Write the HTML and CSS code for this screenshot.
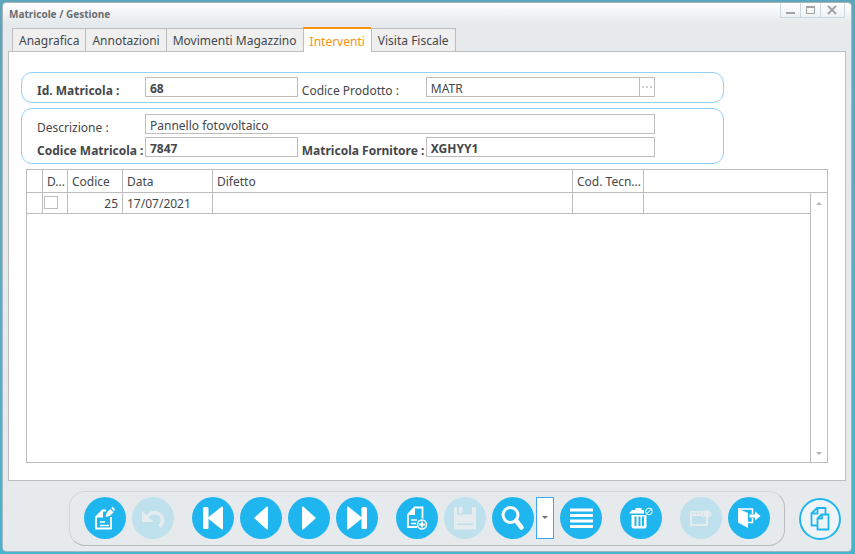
FILE: index.html
```html
<!DOCTYPE html>
<html lang="it">
<head>
    <meta charset="UTF-8">
    <meta name="viewport" content="width=device-width, initial-scale=1.0">
    <title>Matricole / Gestione</title>
    <link rel="stylesheet" href="styles.css">
</head>
<body>
    <main class="window">
        <header class="title-bar">
            <h1>Matricole / Gestione</h1>
            <div class="window-buttons">
                <button type="button" aria-label="Riduci">
                    <svg width="20" height="14" viewBox="0 0 20 14"><path d="M5 10h9" stroke="#a3a3a3" stroke-width="2"/></svg>
                </button>
                <button type="button" aria-label="Ingrandisci">
                    <svg width="20" height="14" viewBox="0 0 20 14"><path d="M5.500 4v6.500h8V4" fill="none" stroke="#a3a3a3"/><path d="M5 4h9" stroke="#a3a3a3" stroke-width="2"/></svg>
                </button>
                <button type="button" class="close" aria-label="Chiudi">
                    <svg width="22" height="14" viewBox="0 0 22 14"><path d="M7 3l8 8M15 3l-8 8" stroke="#a3a3a3" stroke-width="2"/></svg>
                </button>
            </div>
        </header>

        <nav class="tabs">
            <button type="button">Anagrafica</button>
            <button type="button">Annotazioni</button>
            <button type="button">Movimenti Magazzino</button>
            <button type="button" class="active">Interventi</button>
            <button type="button">Visita Fiscale</button>
        </nav>

        <section class="panel">
            <form class="fields">
                <div class="group">
                    <label class="strong" for="id_matricola">Id. Matricola :</label>
                    <input class="strong" type="text" id="id_matricola" value="68">
                    <label class="second" for="codice_prodotto">Codice Prodotto :</label>
                    <div class="lookup">
                        <input type="text" id="codice_prodotto" value="MATR">
                        <button type="button" aria-label="Cerca prodotto">
                            <svg width="14" height="18" viewBox="0 0 14 18"><path d="M2 9h10" stroke="#d0d0d0" stroke-width="2" stroke-dasharray="2 2"/></svg>
                        </button>
                    </div>
                </div>
                <div class="group tall">
                    <label for="descrizione">Descrizione :</label>
                    <input class="wide" type="text" id="descrizione" value="Pannello fotovoltaico">
                    <label class="strong" for="codice_matricola">Codice Matricola :</label>
                    <input class="strong" type="text" id="codice_matricola" value="7847">
                    <label class="strong second" for="matricola_fornitore">Matricola Fornitore :</label>
                    <input class="strong" type="text" id="matricola_fornitore" value="XGHYY1">
                </div>
            </form>

            <table class="grid">
                <colgroup>
                    <col class="col-mark"><col class="col-check"><col class="col-code"><col class="col-date">
                    <col><col class="col-tech"><col class="col-rest"><col class="col-scroll">
                </colgroup>
                <thead>
                    <tr>
                        <th></th>
                        <th>D...</th>
                        <th>Codice</th>
                        <th>Data</th>
                        <th>Difetto</th>
                        <th>Cod. Tecn...</th>
                        <th colspan="2"></th>
                    </tr>
                </thead>
                <tbody>
                    <tr class="record">
                        <td></td>
                        <td class="check"><input type="checkbox" aria-label="D"></td>
                        <td class="number">25</td>
                        <td>17/07/2021</td>
                        <td></td>
                        <td></td>
                        <td></td>
                        <td class="scroll">
                            <button type="button" aria-label="Su"><svg width="6" height="3" viewBox="0 0 6 3"><path d="M0 3L3 0l3 3z" fill="#b4b4b4"/></svg></button>
                        </td>
                    </tr>
                    <tr>
                        <td colspan="7"></td>
                        <td class="scroll bottom">
                            <button type="button" aria-label="Gi&ugrave;"><svg width="6" height="3" viewBox="0 0 6 3"><path d="M0 0h6L3 3z" fill="#b4b4b4"/></svg></button>
                        </td>
                    </tr>
                </tbody>
            </table>
        </section>

        <footer class="footer">
            <div class="toolbar">
                <div class="tools">
                    <button type="button" class="tool" aria-label="Modifica">
                        <svg viewBox="0 0 42 42"><g fill="none" stroke="#fff" stroke-width="1.800"><path d="M18.500 13.500l-6.500 6.500v11.500h15V20M18 13.500h4"/><path d="M16 25h5M16 28.500h9" stroke-width="1.500"/></g><path d="M12 20.500h7v-7z" fill="#fff"/><path d="M21.500 20l1.500-5 3.500-3 3 3.500-4 3.500zM27.300 11l1.400-1.200 2.500 3-1.400 1.200z" fill="#fff"/></svg>
                    </button>
                    <button type="button" class="tool" aria-label="Annulla" disabled>
                        <svg viewBox="0 0 42 42"><path d="M14.500 21c3-8 16-7 16 2.500 0 2.500-1 4.500-3 6" fill="none" stroke="#e6ebed" stroke-width="3.500"/><path d="M10 14v11h12z" fill="#e6ebed"/></svg>
                    </button>
                </div>
                <div class="tools">
                    <button type="button" class="tool" aria-label="Primo">
                        <svg viewBox="0 0 42 42" fill="#fff"><rect x="11" y="10" width="5.500" height="22" rx="1.500"/><path d="M15.500 21L29.500 9.800q1.500-.8 1.500.8v20.800q0 1.600-1.500.8z"/></svg>
                    </button>
                    <button type="button" class="tool" aria-label="Precedente">
                        <svg viewBox="0 0 42 42" fill="#fff"><path d="M14 21L26.500 9.800q1.500-.8 1.500.8v20.800q0 1.600-1.500.8z"/></svg>
                    </button>
                    <button type="button" class="tool" aria-label="Successivo">
                        <svg viewBox="0 0 42 42" fill="#fff"><path d="M28 21L15.500 9.800Q14 9 14 10.600v20.800q0 1.600 1.500.8z"/></svg>
                    </button>
                    <button type="button" class="tool" aria-label="Ultimo">
                        <svg viewBox="0 0 42 42" fill="#fff"><rect x="25.500" y="10" width="5.500" height="22" rx="1.500"/><path d="M26.500 21L12.500 9.800Q11 9 11 10.600v20.800q0 1.600 1.500.8z"/></svg>
                    </button>
                </div>
                <div class="tools">
                    <button type="button" class="tool" aria-label="Nuovo">
                        <svg viewBox="0 0 42 42"><g fill="none" stroke="#fff" stroke-width="1.800"><path d="M18.500 10.500l-6.500 7v12.500h9M18 10.500h8.500v11"/><path d="M15 23h6M15 26.500h5" stroke-width="1.500"/><circle cx="26" cy="27.500" r="4.500" stroke-width="1.500"/></g><path d="M12 18h7v-7.500z" fill="#fff"/><path d="M26 24.500v6M23 27.500h6" stroke="#fff" stroke-width="2"/></svg>
                    </button>
                    <button type="button" class="tool" aria-label="Salva" disabled>
                        <svg viewBox="0 0 42 42" fill="#e6ebed"><path fill-rule="evenodd" d="M10 10h3v7.500h15V10h4v22.500H10zM13 26.500V28h16v-1.500z"/><path d="M15 10h3.500v6H15z"/></svg>
                    </button>
                    <button type="button" class="tool" aria-label="Cerca">
                        <svg viewBox="0 0 42 42" fill="none" stroke="#fff"><circle cx="18.500" cy="18" r="7.500" stroke-width="3"/><path d="M24 23.500l5.500 7" stroke-width="4.500" stroke-linecap="round"/></svg>
                    </button>
                    <button type="button" class="drop" aria-label="Opzioni di ricerca">
                        <svg width="6" height="4" viewBox="0 0 6 4"><path d="M0 0h6L3 3z" fill="#707070"/></svg>
                    </button>
                    <button type="button" class="tool" aria-label="Elenco">
                        <svg viewBox="0 0 42 42"><path d="M10 13h23M10 18.500h23M10 24h23M10 29.500h23" stroke="#fff" stroke-width="3"/></svg>
                    </button>
                </div>
                <div class="tools">
                    <button type="button" class="tool" aria-label="Elimina">
                        <svg viewBox="0 0 42 42"><path fill="#fff" fill-rule="evenodd" d="M9.500 15.800L12 13h3.500v-2h6v2H24v3.500H9.500zM11.500 18h15v11.500q0 2-2 2h-11q-2 0-2-2zM14.500 19.500V29h2v-9.500zM18.500 19.500V29h2v-9.500zM22 19.500V29h2v-9.500z"/><g fill="none" stroke="#fff"><circle cx="29" cy="14.500" r="3.300"/><path d="M26.500 17l5.500-5.500"/></g></svg>
                    </button>
                </div>
                <div class="tools">
                    <button type="button" class="tool" aria-label="Pulisci" disabled>
                        <svg viewBox="0 0 42 42"><path fill="#e6ebed" fill-rule="evenodd" d="M10 14h13v4.500h5V29H10zM12 19v8h14v-7h-3l-1-1zM12 15.500v1.500h1.500v-1.500zM15.500 15.500v1.500H17v-1.500zM19 15.500v1.500h1.500v-1.500z"/><path d="M23 13.500c3-.5 5 1 7.500 6.500-4 1-7 0-7.500-6.500zM26 13.500c3-1 6 1 5.500 6z" fill="#e6ebed"/></svg>
                    </button>
                    <button type="button" class="tool" aria-label="Esci">
                        <svg viewBox="0 0 42 42"><path d="M10 11.500l10 4.500v15l-10-5.500z" fill="#fff"/><path d="M10 12h14.500v5M24.500 21v4.500H19" fill="none" stroke="#fff" stroke-width="1.500"/><path d="M21.500 17.500h5.500V14.500l5.500 4.500-5.500 4.500v-3h-5.500z" fill="#fff"/></svg>
                    </button>
                </div>
            </div>
            <button type="button" class="tool outline" aria-label="Copia">
                <svg viewBox="0 0 42 42"><g fill="none" stroke="#1fb6f0" stroke-width="1.800" stroke-linejoin="round"><path d="M18 27.500h-5.500V15.500l5.500-5.500h8.500v6M18.500 10v5.500h-6"/><path d="M22.500 16.500h7v15h-11v-11z"/><path d="M23 16.500v4h-4.500"/></g></svg>
            </button>
        </footer>
    </main>
</body>
</html>
```
FILE: styles.css
```css
* { box-sizing: border-box; }

body {
    display: flex;
    min-height: 100vh;
    margin: 0;
    padding: 2px 3px 2px 2px;
    background: linear-gradient(#5da5bd, #62a8c1 40%, #46b5ce);
    color: #44474b;
    font: 12px/16px "Noto Sans", "Open Sans", sans-serif;
}

button, input { margin: 0; padding: 0; border: 0; background: none; color: inherit; font: inherit; }
svg { display: block; }

.window {
    display: flex;
    flex: 1;
    flex-direction: column;
    border: 1px solid #a7b5bd;
    border-radius: 4px;
    background: linear-gradient(#fff, #e6eaed 20px);
}

.title-bar { display: flex; justify-content: space-between; padding: 0 6px; }
.title-bar h1 { margin: 0; padding-top: 3px; color: #6c6e71; font-size: 10px; font-weight: bold; }
.window-buttons { display: flex; height: 15px; border: 1px solid #ccd8e0; border-top: 0; }
.window-buttons button { width: 20px; border-right: 1px solid #ccd8e0; }
.window-buttons .close { width: 23px; border-right: 0; }

.tabs { display: flex; align-items: flex-end; padding: 5px 9px 0; }
.tabs button { height: 23px; padding: 2px 6px 0; border: 1px solid #bdbdbd; border-right: 0; border-bottom: 0; background: #efefef; }
.tabs button:last-child { border-right: 1px solid #bdbdbd; }
.tabs .active { z-index: 1; height: 25px; margin-bottom: -1px; border-top: 2px solid #f7920f; background: #fff; color: #f7920f; }

.panel {
    display: flex;
    flex: 1;
    flex-direction: column;
    margin: 0 5px;
    padding: 20px 17px 17px;
    border: 1px solid #bdbdbd;
    background: #fff;
}

.fields { display: flex; flex-direction: column; gap: 5px; max-width: 703px; margin-left: -5px; }
.group {
    display: grid;
    grid-template-columns: 108px 2fr 128px 3fr;
    row-gap: 3px;
    padding: 4px 68px 5px 15px;
    border: 1px solid #93d0f9;
    border-radius: 11px;
}
.group.tall { padding-top: 5px; padding-bottom: 6px; }
.group label { padding-top: 7px; line-height: 13px; white-space: nowrap; }
.group .second { padding-left: 4px; }
.group input { width: 100%; min-width: 0; height: 20px; padding: 2px 4px 0; border: 1px solid #bdbdbd; background: #fff; }
.group .wide { grid-column: 2 / 5; }
.group .strong { font-weight: bold; }
.lookup { display: flex; }
.lookup button { flex: none; height: 20px; border: 1px solid #bdbdbd; border-left: 0; }

.grid { flex: 1; width: 100%; margin-top: 5px; border-collapse: collapse; table-layout: fixed; }
.grid th, .grid td { padding: 2px 4px 0; border: 1px solid #bdbdbd; font-weight: normal; text-align: left; white-space: nowrap; }
.grid th { height: 23px; }
.grid .record { height: 21px; }
.grid .number { text-align: right; }
.grid .check { padding: 0 1px; vertical-align: top; }
.grid .check input { display: block; width: 14px; height: 13px; margin-top: 3px; border: 1px solid #bdbdbd; appearance: none; }
.grid .scroll { padding: 0; border-top-style: none; border-bottom-style: none; }
.grid .bottom { border-bottom-style: solid; vertical-align: bottom; }
.grid .scroll button { display: flex; align-items: center; justify-content: center; width: 100%; height: 18px; }
.col-mark { width: 16px; }
.col-check { width: 25px; }
.col-code { width: 55px; }
.col-date { width: 90px; }
.col-tech { width: 71px; }
.col-rest { width: 167px; }
.col-scroll { width: 17px; }

.footer { display: flex; align-items: center; justify-content: flex-end; gap: 14px; padding: 10px 10px 5px; }
.toolbar {
    display: flex;
    gap: 18px;
    padding: 5px 14px 6px;
    border: 1px solid #b9bdbf;
    border-top-color: #d3d6d7;
    border-left-color: #d3d6d7;
    border-radius: 16px;
}
.tools { display: flex; gap: 6px; }
.tool { width: 42px; height: 42px; border-radius: 50%; background: #1fb6f0; }
.tool:disabled { background: #bfe1ed; }
.tool svg { width: 42px; height: 42px; }
.outline { border: 2px solid #1fb6f0; background: #eef4f7; }
.outline svg { margin: -2px; }
.drop { display: flex; align-items: center; justify-content: center; width: 18px; margin-left: -4px; border: 1px solid #3ba7f5; background: #fff; }
```
